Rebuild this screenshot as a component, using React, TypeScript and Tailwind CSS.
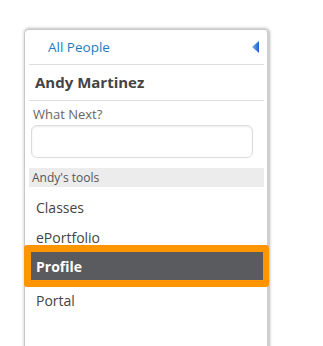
export default function App() {
  const font = { fontFamily: '"Open Sans", "Liberation Sans", sans-serif' };

  return (
    <div className="w-[323px] h-[346px] bg-white overflow-hidden" style={font}>
      {/* Side panel */}
      <div className="ml-[24px] mt-[29px] w-[246px] h-[330px] border border-b-0 border-[#c8c8c8] border-r-[3px] border-r-[#cfcfcf] rounded-t-[5px] shadow-[0_-1px_3px_rgba(0,0,0,0.25)]">
        <div className="ml-[4px] w-[235px]">
          {/* Back link */}
          <div className="h-[35px] flex items-center justify-between border-b border-[#dedede]">
            <span className="ml-[19px] text-[13.5px] text-[#1a7dc2]">All People</span>
            <svg width="7" height="12" viewBox="0 0 7 12" className="mr-[5px]">
              <defs>
                <linearGradient id="tri" x1="0" y1="0" x2="1" y2="0">
                  <stop offset="0" stopColor="#7fb0ec" />
                  <stop offset="1" stopColor="#1d5fd0" />
                </linearGradient>
              </defs>
              <polygon points="7,0 7,12 0,6" fill="url(#tri)" />
            </svg>
          </div>

          {/* Name */}
          <div className="h-[36px] flex items-center border-b border-[#dedede]">
            <span className="ml-[6px] text-[15px] font-bold text-[#444]">Andy Martinez</span>
          </div>

          {/* What next */}
          <div className="mt-[4px] ml-[4px] text-[13px] leading-[18px] text-[#666]">What Next?</div>
          <div className="mt-[2px] ml-[2px] w-[222px] h-[33px] rounded-[6px] border border-[#dcdcdc] shadow-[inset_0_1px_2px_rgba(0,0,0,0.08)]" />

          {/* Tools header */}
          <div className="mt-[10px] h-[19px] bg-[#ececec] flex items-center">
            <span className="ml-[3px] text-[12px] text-[#555]">Andy's tools</span>
          </div>

          {/* Tools list */}
          <div className="mt-[5px] flex flex-col">
            <div className="h-[30px] flex items-center pl-[7px] text-[14px] text-[#444]">Classes</div>
            <div className="h-[30px] flex items-center pl-[7px] text-[14px] text-[#444]">ePortfolio</div>
            <div className="-my-[7px] -ml-[5px] w-[245px] rounded-[3px] bg-[#ff9500] pt-[7px] pb-[7px] pl-[7px] pr-[6px]">
              <div className="h-[28px] flex items-center pl-[5px] bg-[#5a5b5f] text-[14px] font-bold text-white">
                Profile
              </div>
            </div>
            <div className="mt-[5px] h-[30px] flex items-center pl-[7px] text-[14px] text-[#444]">Portal</div>
          </div>
        </div>
      </div>
    </div>
  );
}
